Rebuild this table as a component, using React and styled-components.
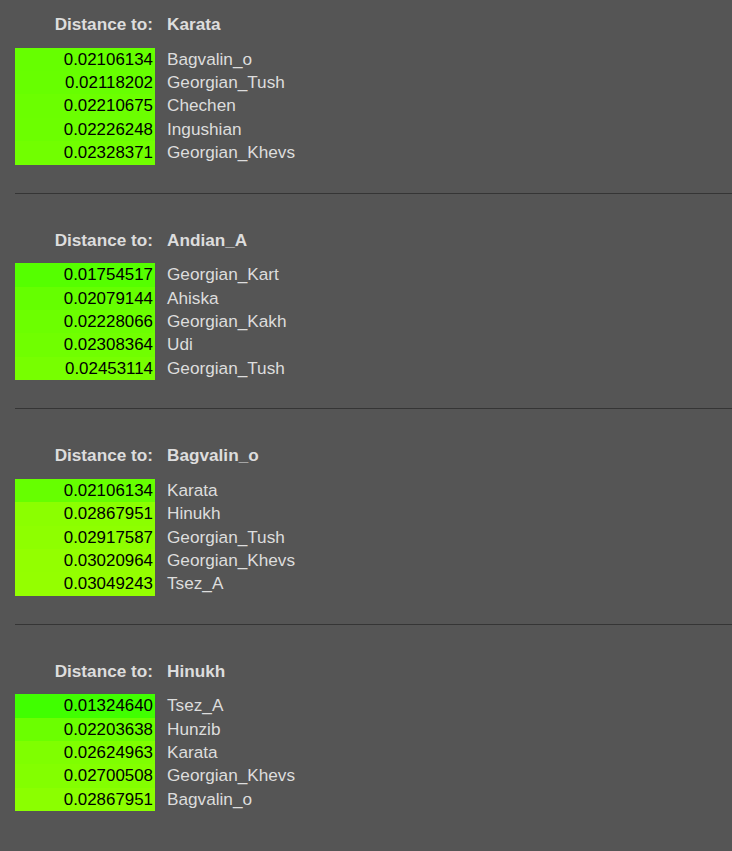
import React from 'react'
import styled, { createGlobalStyle } from 'styled-components';

const GlobalStyle = createGlobalStyle`
    body {
        margin: 0;
        background: #555555;
        font-family: "Liberation Sans", Arial, sans-serif;
    }
`;

const Page = styled.div`
    display: flex;
    flex-direction: column;
`;
const Section = styled.section`
    padding: 13px 0 28px 15px;
`;
const Divider = styled.div`
    height: 1px;
    margin: 0 0 21.9px 15px;
    background: #353535;
`;
const Table = styled.div`
    display: grid;
    grid-template-columns: 140px 1fr;
    column-gap: 12px;
`;
const HeadLabel = styled.div`
    height: 23.4px;
    line-height: 23.4px;
    padding-right: 2px;
    text-align: right;
    font-size: 17.2px;
    font-weight: bold;
    color: #dddddd;
`;
const HeadName = styled(HeadLabel)`
    text-align: left;
    padding-right: 0;
`;
const Spacer = styled.div`
    grid-column: 1 / 3;
    height: 11.3px;
`;
const Value = styled.div`
    height: 23.4px;
    line-height: 23.4px;
    padding-right: 2px;
    text-align: right;
    font-size: 16.9px;
    color: #000;
    background: ${p => p.color};
`;
const Name = styled.div`
    height: 23.4px;
    line-height: 23.4px;
    font-size: 17.2px;
    color: #dddddd;
`;

const Groups = [
    {
        "target": "Karata",
        "rows": [
            ["0.02106134", "Bagvalin_o"],
            ["0.02118202", "Georgian_Tush"],
            ["0.02210675", "Chechen"],
            ["0.02226248", "Ingushian"],
            ["0.02328371", "Georgian_Khevs"]
        ]
    },
    {
        "target": "Andian_A",
        "rows": [
            ["0.01754517", "Georgian_Kart"],
            ["0.02079144", "Ahiska"],
            ["0.02228066", "Georgian_Kakh"],
            ["0.02308364", "Udi"],
            ["0.02453114", "Georgian_Tush"]
        ]
    },
    {
        "target": "Bagvalin_o",
        "rows": [
            ["0.02106134", "Karata"],
            ["0.02867951", "Hinukh"],
            ["0.02917587", "Georgian_Tush"],
            ["0.03020964", "Georgian_Khevs"],
            ["0.03049243", "Tsez_A"]
        ]
    },
    {
        "target": "Hinukh",
        "rows": [
            ["0.01324640", "Tsez_A"],
            ["0.02203638", "Hunzib"],
            ["0.02624963", "Karata"],
            ["0.02700508", "Georgian_Khevs"],
            ["0.02867951", "Bagvalin_o"]
        ]
    }
]

// distance -> shade of green, closer is greener
const shade = (d) => {
    const r = Math.min(255, Math.round(parseFloat(d) * 4850));
    return `rgb(${r}, 255, 0)`;
}

function App() {
    return (
        <Page>
            <GlobalStyle />
            {Groups.map((g, i) => (
                <React.Fragment key={g.target}>
                    {i > 0 && <Divider />}
                    <Section>
                        <Table>
                            <HeadLabel>Distance to:</HeadLabel>
                            <HeadName>{g.target}</HeadName>
                            <Spacer />
                            {g.rows.map(([d, name]) => (
                                <React.Fragment key={name}>
                                    <Value color={shade(d)}>{d}</Value>
                                    <Name>{name}</Name>
                                </React.Fragment>
                            ))}
                        </Table>
                    </Section>
                </React.Fragment>
            ))}
        </Page>
    )
}

export default App
